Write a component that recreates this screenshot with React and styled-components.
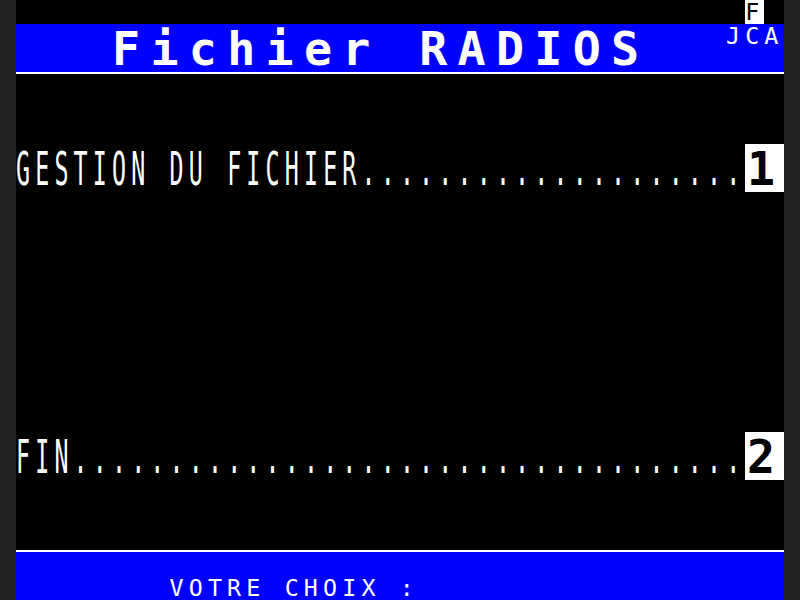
import React from 'react';
import styled, { createGlobalStyle } from 'styled-components';

// Minitel videotex page: 40 columns x 25 rows
const COLS = 40;
const ROWS = 25;
const CELL_W = 19.2;
const CELL_H = 24;

const BLUE = '#0000ff';
const INK = '#ffffff';

const GlobalStyle = createGlobalStyle`
  html, body {
    margin: 0;
    padding: 0;
    background: #222222;
  }
  body {
    width: 800px;
    height: 600px;
    overflow: hidden;
  }
`;

const Screen = styled.div`
  width: ${COLS * CELL_W}px;
  height: ${ROWS * CELL_H}px;
  margin: 0 auto;
  background: #000;
  display: grid;
  grid-template-columns: repeat(${COLS}, ${CELL_W}px);
  grid-template-rows: repeat(${ROWS}, ${CELL_H}px);
  overflow: hidden;
`;

// one run of videotex characters; $dw / $dh = double width / double height
const Glyphs = styled.span`
  grid-column: ${p => p.$col || 'auto'};
  grid-row: ${p => p.$row || 'auto'};
  display: block;
  font-family: 'DejaVu Sans Mono', 'Liberation Mono', monospace;
  font-size: 23.3px;
  font-weight: ${p => (p.$bold ? 700 : 400)};
  line-height: 22px;
  letter-spacing: ${p => (p.$solo ? 0 : 5.17)}px;
  white-space: pre;
  color: ${p => p.$ink || INK};
  transform-origin: 0 0;
  transform: ${p => (p.$dh ? 'translateY(3px) ' : 'translateY(1px) ')}scale(${p => (p.$dw ? 2 : 1)}, ${p => (p.$dh ? 2 : 1)});
`;

const Band = styled.div`
  grid-column: 1 / -1;
  grid-row: ${p => p.$row} / span 2;
  background: ${BLUE};
  display: grid;
  grid-template-columns: repeat(${COLS}, ${CELL_W}px);
  grid-template-rows: repeat(2, ${CELL_H}px);
`;

const Rule = styled.div`
  grid-column: 1 / -1;
  grid-row: ${p => p.$row};
  align-self: ${p => p.$edge || 'start'};
  height: 2px;
  background: ${INK};
`;

const PageTag = styled.div`
  grid-column: 39;
  grid-row: 1;
  background: #fff;
  overflow: hidden;
`;

const KeyBox = styled.div`
  grid-column: 39 / span 2;
  grid-row: ${p => p.$row} / span 2;
  background: #fff;
  padding-left: 2px;
  overflow: hidden;
`;

function MenuEntry({ label, keyNum, row }) {
  const dots = '.'.repeat(38 - label.length);
  return (
    <>
      <Glyphs $dh $col="1 / span 38" $row={`${row} / span 2`}>
        {label + dots}
      </Glyphs>
      <KeyBox $row={row}>
        <Glyphs $dw $dh $bold $solo $ink="#000">{keyNum}</Glyphs>
      </KeyBox>
    </>
  );
}

export default function App() {
  return (
    <>
      <GlobalStyle />
      <Screen>
        <PageTag>
          <Glyphs $solo $ink="#000">F</Glyphs>
        </PageTag>

        <Band $row={2}>
          <Glyphs $dw $dh $bold $col="6 / span 28" $row="1 / span 2">
            Fichier RADIOS
          </Glyphs>
          <Glyphs $col="38 / span 3" $row="1">JCA</Glyphs>
        </Band>
        <Rule $row={4} />

        <MenuEntry label="GESTION DU FICHIER" keyNum="1" row={7} />
        <MenuEntry label="FIN" keyNum="2" row={19} />

        <Rule $row={23} $edge="end" />
        <Band $row={24}>
          <Glyphs $col="9 / span 20" $row="2">VOTRE CHOIX :</Glyphs>
        </Band>
      </Screen>
    </>
  );
}
